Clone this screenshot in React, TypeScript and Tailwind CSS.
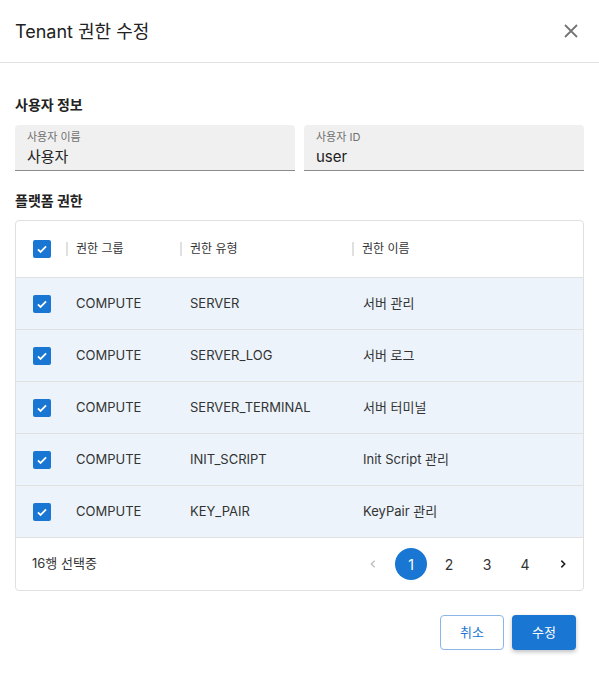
const rows = [
  { group: "COMPUTE", type: "SERVER", name: "서버 관리" },
  { group: "COMPUTE", type: "SERVER_LOG", name: "서버 로그" },
  { group: "COMPUTE", type: "SERVER_TERMINAL", name: "서버 터미널" },
  { group: "COMPUTE", type: "INIT_SCRIPT", name: "Init Script 관리" },
  { group: "COMPUTE", type: "KEY_PAIR", name: "KeyPair 관리" },
];

function Check() {
  return (
    <span className="flex h-[18px] w-[18px] items-center justify-center rounded-[2px] bg-[#1976d2]">
      <svg viewBox="0 0 24 24" className="h-[14px] w-[14px]" fill="none" stroke="#fff" strokeWidth="3">
        <path d="M5 12.5l4.5 4.5L19 7.5" />
      </svg>
    </span>
  );
}

function Field({ label, value }: { label: string; value: string }) {
  return (
    <div className="flex h-[46px] flex-1 flex-col rounded-t-[4px] border-b border-[#8c8c8c] bg-[#f0f0f0] px-3 pt-[5px]">
      <span className="text-[11px] leading-[14px] text-[#707070]">{label}</span>
      <span className="mt-[3px] text-[15px] leading-[20px] text-[#222]">{value}</span>
    </div>
  );
}

export default function App() {
  return (
    <div
      className="flex h-[674px] w-[599px] flex-col bg-white text-[#212121]"
      style={{ fontFamily: '"Inter", "Noto Sans CJK KR", sans-serif' }}
    >
      <div className="flex h-[63px] items-center justify-between border-b border-[#e0e0e0] px-[15px]">
        <h1 className="text-[18px] font-normal text-[#222]">Tenant 권한 수정</h1>
        <svg viewBox="0 0 24 24" className="mr-[1px] h-[24px] w-[24px]" fill="none" stroke="#757575" strokeWidth="1.8">
          <path d="M6 6l12 12M18 6L6 18" />
        </svg>
      </div>

      <div className="flex flex-col px-[15px] pt-[32px]">
        <h2 className="text-[14px] font-bold leading-[20px] text-[#222]">사용자 정보</h2>
        <div className="mt-[10px] flex gap-[9px]">
          <Field label="사용자 이름" value="사용자" />
          <Field label="사용자 ID" value="user" />
        </div>

        <h2 className="mt-[20px] text-[14px] font-bold leading-[20px] text-[#222]">플랫폼 권한</h2>
        <div className="mt-[9px] overflow-hidden rounded-[4px] border border-[#e0e0e0]">
          <div className="flex h-[57px] items-center border-b border-[#e0e0e0] text-[12px] text-[#333]">
            <div className="flex w-[50px] justify-center pl-[1px]">
              <Check />
            </div>
            <div className="flex w-[114px] items-center gap-[8px]">
              <span className="h-[14px] w-[2px] bg-[#e0e0e0]" />
              <span>권한 그룹</span>
            </div>
            <div className="flex w-[172px] items-center gap-[8px]">
              <span className="h-[14px] w-[2px] bg-[#e0e0e0]" />
              <span>권한 유형</span>
            </div>
            <div className="flex items-center gap-[8px]">
              <span className="h-[14px] w-[2px] bg-[#e0e0e0]" />
              <span>권한 이름</span>
            </div>
          </div>
          {rows.map((r) => (
            <div
              key={r.type}
              className="flex h-[52px] items-center border-b border-[#e0e0e0] bg-[#ecf3fb] text-[13px] text-[#333]"
            >
              <div className="flex w-[50px] justify-center pl-[1px]">
                <Check />
              </div>
              <div className="w-[114px] pl-[10px]">{r.group}</div>
              <div className="w-[172px] pl-[10px]">{r.type}</div>
              <div className="pl-[11px]">{r.name}</div>
            </div>
          ))}
          <div className="flex h-[52px] items-center justify-between pl-[16px] pr-[4px] text-[13px] text-[#333]">
            <span>16행 선택중</span>
            <div className="flex items-center gap-[6px] text-[14px]">
              <span className="flex h-[32px] w-[32px] items-center justify-center">
                <svg viewBox="0 0 24 24" className="h-[16px] w-[16px]" fill="none" stroke="#bdbdbd" strokeWidth="2">
                  <path d="M14.5 7l-5 5 5 5" />
                </svg>
              </span>
              <span className="flex h-[32px] w-[32px] items-center justify-center rounded-full bg-[#1976d2] text-white">1</span>
              <span className="flex h-[32px] w-[32px] items-center justify-center">2</span>
              <span className="flex h-[32px] w-[32px] items-center justify-center">3</span>
              <span className="flex h-[32px] w-[32px] items-center justify-center">4</span>
              <span className="flex h-[32px] w-[32px] items-center justify-center">
                <svg viewBox="0 0 24 24" className="h-[16px] w-[16px]" fill="none" stroke="#222" strokeWidth="2.4">
                  <path d="M9.5 7l5 5-5 5" />
                </svg>
              </span>
            </div>
          </div>
        </div>

        <div className="mt-[24px] flex justify-end gap-[8px] pr-[8px]">
          <button className="h-[35px] w-[64px] rounded-[4px] border border-[#8cb6e6] bg-white text-[13px] text-[#1976d2]">
            취소
          </button>
          <button className="h-[35px] w-[64px] rounded-[4px] bg-[#1976d2] text-[13px] text-white shadow-[0_2px_4px_rgba(0,0,0,0.25)]">
            수정
          </button>
        </div>
      </div>
    </div>
  );
}
